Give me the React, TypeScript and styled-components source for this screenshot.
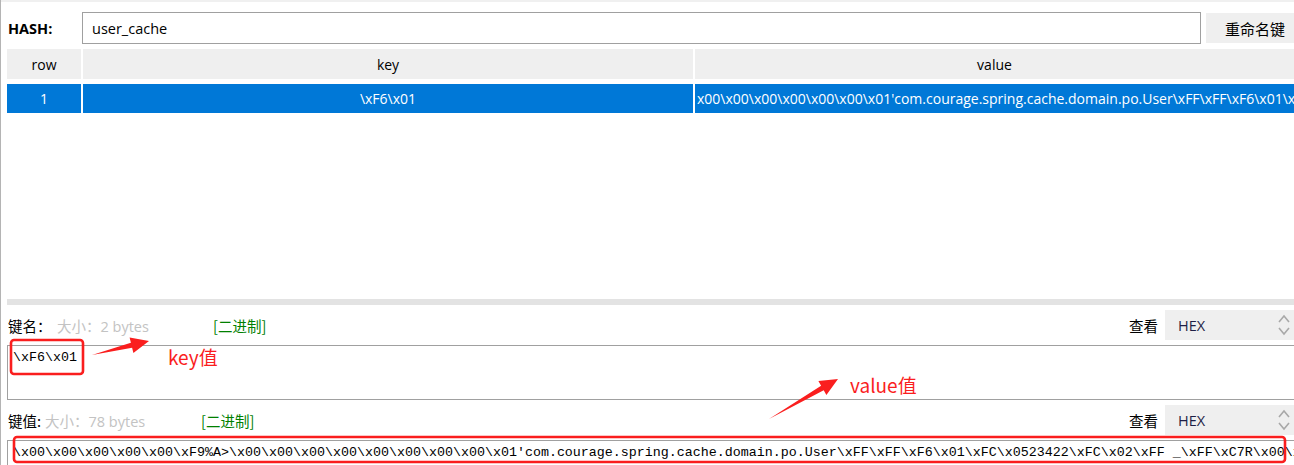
import React from "react";
import styled, { createGlobalStyle } from "styled-components";

const Global = createGlobalStyle`
  html, body { margin: 0; padding: 0; background: #fff; overflow: hidden; }
  body { font-family: "Segoe UI", "Noto Sans", "Noto Sans CJK SC", sans-serif; }
`;

const UI = `"Segoe UI", "Open Sans", "Noto Sans CJK SC", sans-serif`;
const CJK = `"Noto Sans CJK SC", "Noto Sans", sans-serif`;
const MONO = `"Liberation Mono", "Noto Sans CJK SC", monospace`;
const RED = "#fa1e1e";

const Page = styled.div`
  position: relative;
  width: 1294px;
  height: 465px;
  overflow: hidden;
  box-sizing: border-box;
  border-left: 1px solid #b4b4b4;
  background: #fff;
  display: flex;
  flex-direction: column;
`;

const TopStrip = styled.div`
  height: 2px;
  background: #f0f0f0;
  flex: none;
`;

const Content = styled.div`
  margin-left: 6px;
  display: flex;
  flex-direction: column;
`;

const HashRow = styled.div`
  margin-top: 10px;
  height: 32px;
  display: flex;
  align-items: center;
`;

const HashLabel = styled.div`
  width: 75px;
  padding-left: 1px;
  box-sizing: border-box;
  font-family: ${UI};
  font-weight: 700;
  font-size: 14.5px;
  color: #000;
`;

const HashInput = styled.div`
  flex: 1;
  height: 32px;
  box-sizing: border-box;
  border: 1px solid #a0a0a0;
  display: flex;
  align-items: center;
  padding-left: 9px;
  font-family: ${UI};
  font-size: 14.5px;
  color: #000;
`;

const RenameButton = styled.div`
  margin-left: 5px;
  width: 88px;
  height: 30px;
  background: #efefef;
  box-sizing: border-box;
  padding-left: 19px;
  display: flex;
  align-items: center;
  font-family: ${CJK};
  font-size: 15px;
  color: #000;
  white-space: nowrap;
`;

const TableArea = styled.div`
  margin-top: 5px;
  height: 250px;
  display: grid;
  grid-template-columns: 74px 610px 1fr;
  grid-auto-rows: min-content;
  column-gap: 2px;
  row-gap: 5px;
  align-content: start;
`;

const HeadCell = styled.div`
  height: 30px;
  background: #efefef;
  display: flex;
  align-items: center;
  justify-content: center;
  font-family: ${UI};
  font-size: 14px;
  color: #000;
`;

const Cell = styled.div<{ $left?: boolean }>`
  height: 29px;
  background: #0078d7;
  color: #fff;
  display: flex;
  align-items: center;
  justify-content: ${(p) => (p.$left ? "flex-start" : "center")};
  padding-left: ${(p) => (p.$left ? "2px" : "0")};
  overflow: hidden;
  white-space: nowrap;
  font-family: ${UI};
  font-size: 14px;
  box-sizing: border-box;
`;

const Splitter = styled.div`
  height: 6px;
  background: #e3e3e3;
`;

const LabelRow = styled.div`
  height: 40px;
  display: flex;
  align-items: center;
  font-family: ${CJK};
  font-size: 14.5px;
`;

const Label = styled.span<{ $w: number }>`
  width: ${(p) => p.$w}px;
  padding-left: 1px;
  box-sizing: border-box;
  color: #000;
  white-space: nowrap;
`;

const SizeText = styled.span`
  width: 156px;
  color: #c3c3c3;
  white-space: nowrap;
  font-family: ${UI.replace('"Segoe UI", ', '"Segoe UI", ')};
`;

const Binary = styled.span`
  color: #008000;
  white-space: nowrap;
`;

const Spring = styled.span`
  flex: 1;
`;

const ViewLabel = styled.span`
  color: #000;
  margin-right: 7px;
`;

const Combo = styled.div`
  width: 129px;
  height: 30px;
  background: #efefef;
  display: flex;
  align-items: center;
  justify-content: space-between;
  padding: 0 3px 0 13px;
  box-sizing: border-box;
  font-family: ${UI};
  font-size: 14.5px;
  color: #1e1e46;
`;

const TextBox = styled.div<{ $h: number }>`
  height: ${(p) => p.$h}px;
  box-sizing: border-box;
  border: 1px solid #a0a0a0;
  border-right: none;
  padding: 4px 5px;
  font-family: ${MONO};
  font-size: 13.33px;
  line-height: 16px;
  color: #000;
  white-space: nowrap;
  overflow: hidden;
`;

const Overlay = styled.svg`
  position: absolute;
  left: 0;
  top: 0;
  width: 1294px;
  height: 465px;
  pointer-events: none;
`;

const Note = styled.div<{ $x: number; $y: number }>`
  position: absolute;
  left: ${(p) => p.$x}px;
  top: ${(p) => p.$y}px;
  font-family: ${CJK};
  font-size: 19px;
  line-height: 24px;
  color: ${RED};
  white-space: nowrap;
`;

const Chevrons = () => (
  <svg width="14" height="26" viewBox="0 0 14 26">
    <polyline points="2,10 7,4 12,10" fill="none" stroke="#a8a8a8" strokeWidth="1.6" />
    <polyline points="2,16 7,22 12,16" fill="none" stroke="#a8a8a8" strokeWidth="1.6" />
  </svg>
);

function arrow(tx: number, ty: number, hx: number, hy: number) {
  const dx = hx - tx;
  const dy = hy - ty;
  const len = Math.hypot(dx, dy);
  const ux = dx / len;
  const uy = dy / len;
  const nx = -uy;
  const ny = ux;
  const hl = 18;
  const hw = 8;
  const sw = 2.6;
  const bx = hx - hl * ux;
  const by = hy - hl * uy;
  const pts = [
    [tx, ty],
    [bx + sw * nx, by + sw * ny],
    [bx + hw * nx, by + hw * ny],
    [hx, hy],
    [bx - hw * nx, by - hw * ny],
    [bx - sw * nx, by - sw * ny],
  ];
  return pts.map((p) => p.map((v) => v.toFixed(1)).join(",")).join(" ");
}

const VALUE_ROW =
  "x00\\x00\\x00\\x00\\x00\\x00\\x01'com.courage.spring.cache.domain.po.User\\xFF\\xFF\\xF6\\x01\\xFC\\x0523422\\xFC\\x02";
const VALUE_TEXT =
  "\\x00\\x00\\x00\\x00\\x00\\xF9%A>\\x00\\x00\\x00\\x00\\x00\\x00\\x00\\x00\\x01'com.courage.spring.cache.domain.po.User\\xFF\\xFF\\xF6\\x01\\xFC\\x0523422\\xFC\\x02\\xFF _\\xFF\\xC7R\\x00\\x00";

export default function App() {
  return (
    <>
      <Global />
      <Page>
        <TopStrip />
        <Content>
          <HashRow>
            <HashLabel>HASH:</HashLabel>
            <HashInput>user_cache</HashInput>
            <RenameButton>重命名键</RenameButton>
          </HashRow>
          <TableArea>
            <HeadCell>row</HeadCell>
            <HeadCell>key</HeadCell>
            <HeadCell>value</HeadCell>
            <Cell>1</Cell>
            <Cell>\xF6\x01</Cell>
            <Cell $left>{VALUE_ROW}</Cell>
          </TableArea>
          <Splitter />
          <LabelRow>
            <Label $w={50}>键名：</Label>
            <SizeText>大小：2 bytes</SizeText>
            <Binary>[二进制]</Binary>
            <Spring />
            <ViewLabel>查看</ViewLabel>
            <Combo>
              HEX
              <Chevrons />
            </Combo>
          </LabelRow>
          <TextBox $h={55}>\xF6\x01</TextBox>
          <LabelRow>
            <Label $w={38}>键值:</Label>
            <SizeText>大小：78 bytes</SizeText>
            <Binary>[二进制]</Binary>
            <Spring />
            <ViewLabel>查看</ViewLabel>
            <Combo>
              HEX
              <Chevrons />
            </Combo>
          </LabelRow>
          <TextBox $h={40}>{VALUE_TEXT}</TextBox>
        </Content>
        <Overlay viewBox="0 0 1294 465">
          <rect x="10" y="340" width="72" height="34" rx="3" fill="none" stroke={RED} strokeWidth="2.6" />
          <rect x="13" y="437" width="1271" height="25" rx="3" fill="none" stroke={RED} strokeWidth="2.6" />
          <polygon points={arrow(91, 355, 148, 341)} fill={RED} />
          <polygon points={arrow(768, 419, 837, 379)} fill={RED} />
        </Overlay>
        <Note $x={167} $y={345}>key值</Note>
        <Note $x={849} $y={373}>value值</Note>
      </Page>
    </>
  );
}
